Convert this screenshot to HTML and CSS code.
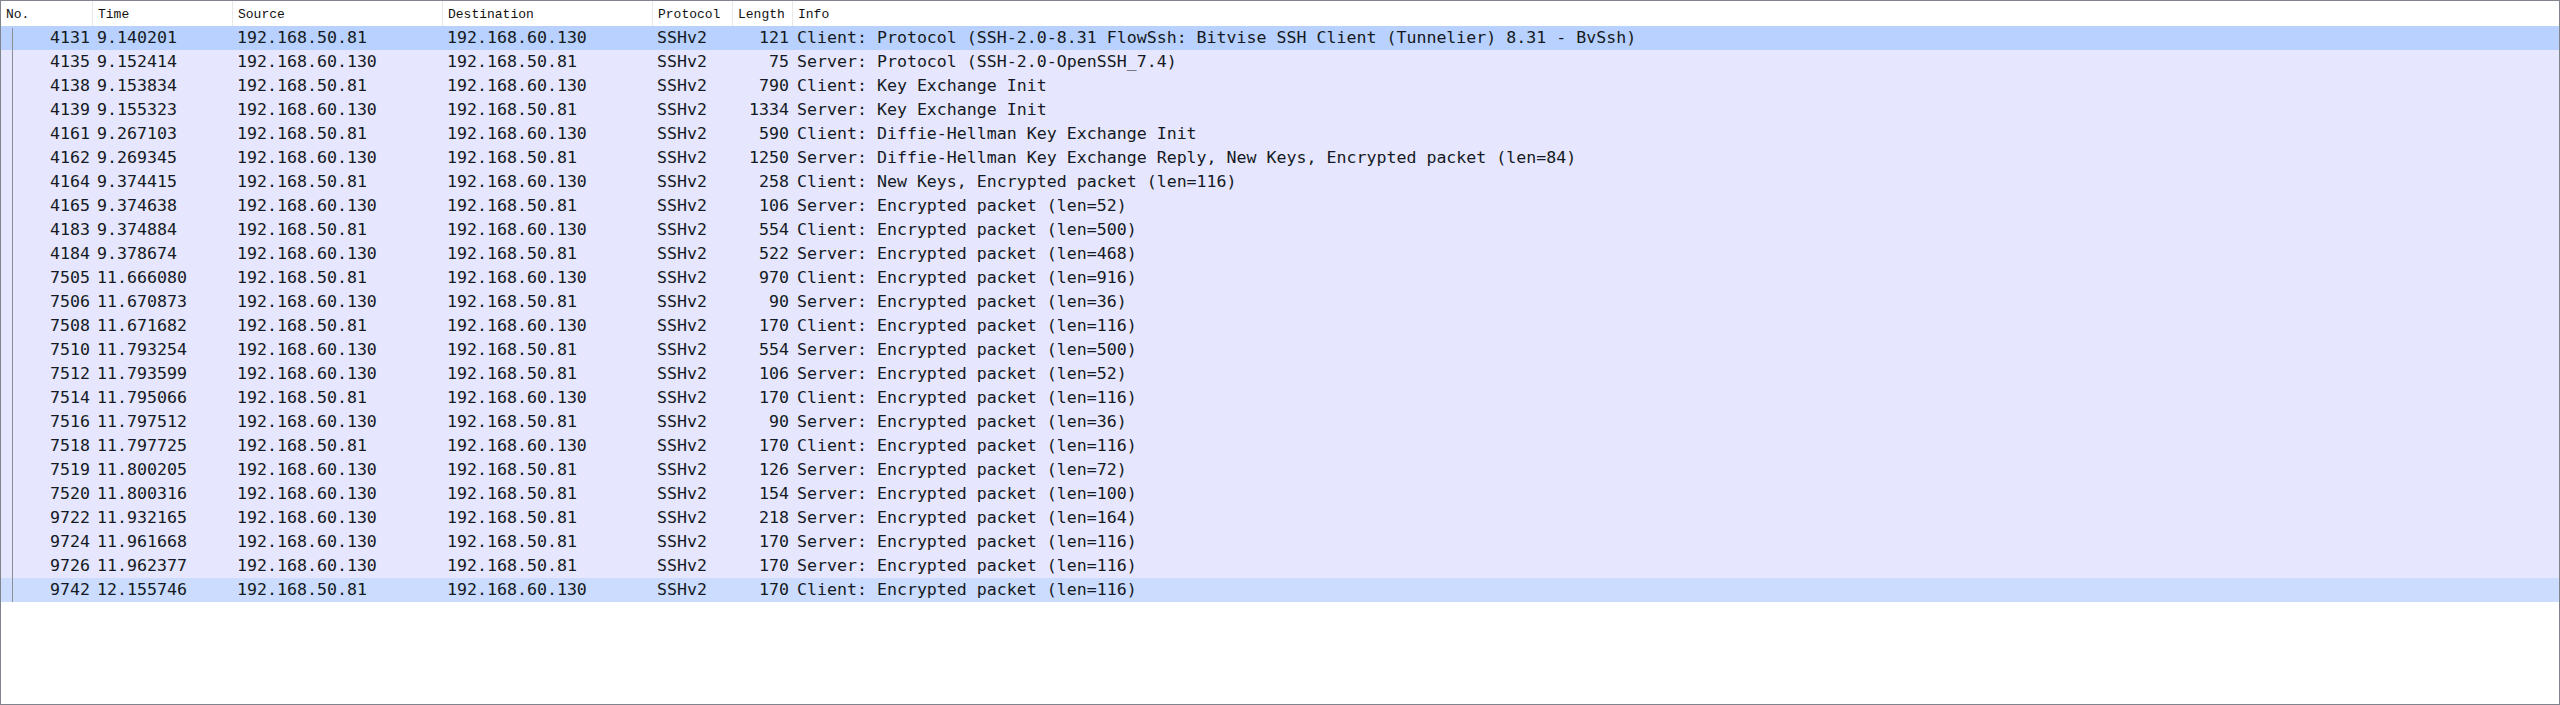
FILE: index.html
```html
<!DOCTYPE html>
<html>
<head>
<meta charset="utf-8">
<link rel="stylesheet" href="styles.css">
</head>
<body>
<div class="frame">
  <div class="head row">
    <div class="hc">No.</div>
    <div class="hc">Time</div>
    <div class="hc">Source</div>
    <div class="hc">Destination</div>
    <div class="hc">Protocol</div>
    <div class="hc">Length</div>
    <div class="hc last">Info</div>
  </div>
  <div class="rows">
    <div class="row pkt sel"><span class="num">4131</span><span>9.140201</span><span>192.168.50.81</span><span>192.168.60.130</span><span>SSHv2</span><span class="num len">121</span><span>Client: Protocol (SSH-2.0-8.31 FlowSsh: Bitvise SSH Client (Tunnelier) 8.31 - BvSsh)</span></div>
    <div class="row pkt"><span class="num">4135</span><span>9.152414</span><span>192.168.60.130</span><span>192.168.50.81</span><span>SSHv2</span><span class="num len">75</span><span>Server: Protocol (SSH-2.0-OpenSSH_7.4)</span></div>
    <div class="row pkt"><span class="num">4138</span><span>9.153834</span><span>192.168.50.81</span><span>192.168.60.130</span><span>SSHv2</span><span class="num len">790</span><span>Client: Key Exchange Init</span></div>
    <div class="row pkt"><span class="num">4139</span><span>9.155323</span><span>192.168.60.130</span><span>192.168.50.81</span><span>SSHv2</span><span class="num len">1334</span><span>Server: Key Exchange Init</span></div>
    <div class="row pkt"><span class="num">4161</span><span>9.267103</span><span>192.168.50.81</span><span>192.168.60.130</span><span>SSHv2</span><span class="num len">590</span><span>Client: Diffie-Hellman Key Exchange Init</span></div>
    <div class="row pkt"><span class="num">4162</span><span>9.269345</span><span>192.168.60.130</span><span>192.168.50.81</span><span>SSHv2</span><span class="num len">1250</span><span>Server: Diffie-Hellman Key Exchange Reply, New Keys, Encrypted packet (len=84)</span></div>
    <div class="row pkt"><span class="num">4164</span><span>9.374415</span><span>192.168.50.81</span><span>192.168.60.130</span><span>SSHv2</span><span class="num len">258</span><span>Client: New Keys, Encrypted packet (len=116)</span></div>
    <div class="row pkt"><span class="num">4165</span><span>9.374638</span><span>192.168.60.130</span><span>192.168.50.81</span><span>SSHv2</span><span class="num len">106</span><span>Server: Encrypted packet (len=52)</span></div>
    <div class="row pkt"><span class="num">4183</span><span>9.374884</span><span>192.168.50.81</span><span>192.168.60.130</span><span>SSHv2</span><span class="num len">554</span><span>Client: Encrypted packet (len=500)</span></div>
    <div class="row pkt"><span class="num">4184</span><span>9.378674</span><span>192.168.60.130</span><span>192.168.50.81</span><span>SSHv2</span><span class="num len">522</span><span>Server: Encrypted packet (len=468)</span></div>
    <div class="row pkt"><span class="num">7505</span><span>11.666080</span><span>192.168.50.81</span><span>192.168.60.130</span><span>SSHv2</span><span class="num len">970</span><span>Client: Encrypted packet (len=916)</span></div>
    <div class="row pkt"><span class="num">7506</span><span>11.670873</span><span>192.168.60.130</span><span>192.168.50.81</span><span>SSHv2</span><span class="num len">90</span><span>Server: Encrypted packet (len=36)</span></div>
    <div class="row pkt"><span class="num">7508</span><span>11.671682</span><span>192.168.50.81</span><span>192.168.60.130</span><span>SSHv2</span><span class="num len">170</span><span>Client: Encrypted packet (len=116)</span></div>
    <div class="row pkt"><span class="num">7510</span><span>11.793254</span><span>192.168.60.130</span><span>192.168.50.81</span><span>SSHv2</span><span class="num len">554</span><span>Server: Encrypted packet (len=500)</span></div>
    <div class="row pkt"><span class="num">7512</span><span>11.793599</span><span>192.168.60.130</span><span>192.168.50.81</span><span>SSHv2</span><span class="num len">106</span><span>Server: Encrypted packet (len=52)</span></div>
    <div class="row pkt"><span class="num">7514</span><span>11.795066</span><span>192.168.50.81</span><span>192.168.60.130</span><span>SSHv2</span><span class="num len">170</span><span>Client: Encrypted packet (len=116)</span></div>
    <div class="row pkt"><span class="num">7516</span><span>11.797512</span><span>192.168.60.130</span><span>192.168.50.81</span><span>SSHv2</span><span class="num len">90</span><span>Server: Encrypted packet (len=36)</span></div>
    <div class="row pkt"><span class="num">7518</span><span>11.797725</span><span>192.168.50.81</span><span>192.168.60.130</span><span>SSHv2</span><span class="num len">170</span><span>Client: Encrypted packet (len=116)</span></div>
    <div class="row pkt"><span class="num">7519</span><span>11.800205</span><span>192.168.60.130</span><span>192.168.50.81</span><span>SSHv2</span><span class="num len">126</span><span>Server: Encrypted packet (len=72)</span></div>
    <div class="row pkt"><span class="num">7520</span><span>11.800316</span><span>192.168.60.130</span><span>192.168.50.81</span><span>SSHv2</span><span class="num len">154</span><span>Server: Encrypted packet (len=100)</span></div>
    <div class="row pkt"><span class="num">9722</span><span>11.932165</span><span>192.168.60.130</span><span>192.168.50.81</span><span>SSHv2</span><span class="num len">218</span><span>Server: Encrypted packet (len=164)</span></div>
    <div class="row pkt"><span class="num">9724</span><span>11.961668</span><span>192.168.60.130</span><span>192.168.50.81</span><span>SSHv2</span><span class="num len">170</span><span>Server: Encrypted packet (len=116)</span></div>
    <div class="row pkt"><span class="num">9726</span><span>11.962377</span><span>192.168.60.130</span><span>192.168.50.81</span><span>SSHv2</span><span class="num len">170</span><span>Server: Encrypted packet (len=116)</span></div>
    <div class="row pkt hover"><span class="num">9742</span><span>12.155746</span><span>192.168.50.81</span><span>192.168.60.130</span><span>SSHv2</span><span class="num len">170</span><span>Client: Encrypted packet (len=116)</span></div>
  </div>
</div>
</body>
</html>
```

FILE: styles.css
```css
html, body {
  margin: 0;
  padding: 0;
  background: #ffffff;
}

.frame {
  width: 2560px;
  height: 705px;
  box-sizing: border-box;
  border: 1px solid #80858d;
  overflow: hidden;
  background: #ffffff;
}

.row {
  display: grid;
  grid-template-columns: 92px 140px 210px 210px 80px 60px 1fr;
}

.head {
  height: 25px;
  background: #ffffff;
  font-family: "Liberation Mono", monospace;
  font-size: 13px;
  color: #111111;
}

.hc {
  display: flex;
  align-items: center;
  padding: 2px 0 0 5px;
  border-right: 1px solid #e8e8e8;
  white-space: nowrap;
  overflow: hidden;
}

.hc.last {
  border-right: none;
}

.rows {
  position: relative;
}

.rows::before {
  content: "";
  position: absolute;
  left: 11px;
  top: 2px;
  bottom: 0;
  width: 1px;
  background: #8c8f96;
}

.pkt {
  height: 24px;
  background: #e6e6fe;
  font-family: "DejaVu Sans Mono", "Liberation Mono", monospace;
  font-size: 16.6px;
  line-height: 24px;
  color: #141a24;
}

.pkt.sel {
  background: #b9d1fe;
}

.pkt.hover {
  background: #cbdcfe;
}

.pkt span {
  white-space: nowrap;
  overflow: hidden;
  padding-left: 4px;
}

.pkt span.num {
  text-align: right;
  padding-left: 0;
  padding-right: 3px;
}

.pkt span.len {
  padding-right: 4px;
}
```
